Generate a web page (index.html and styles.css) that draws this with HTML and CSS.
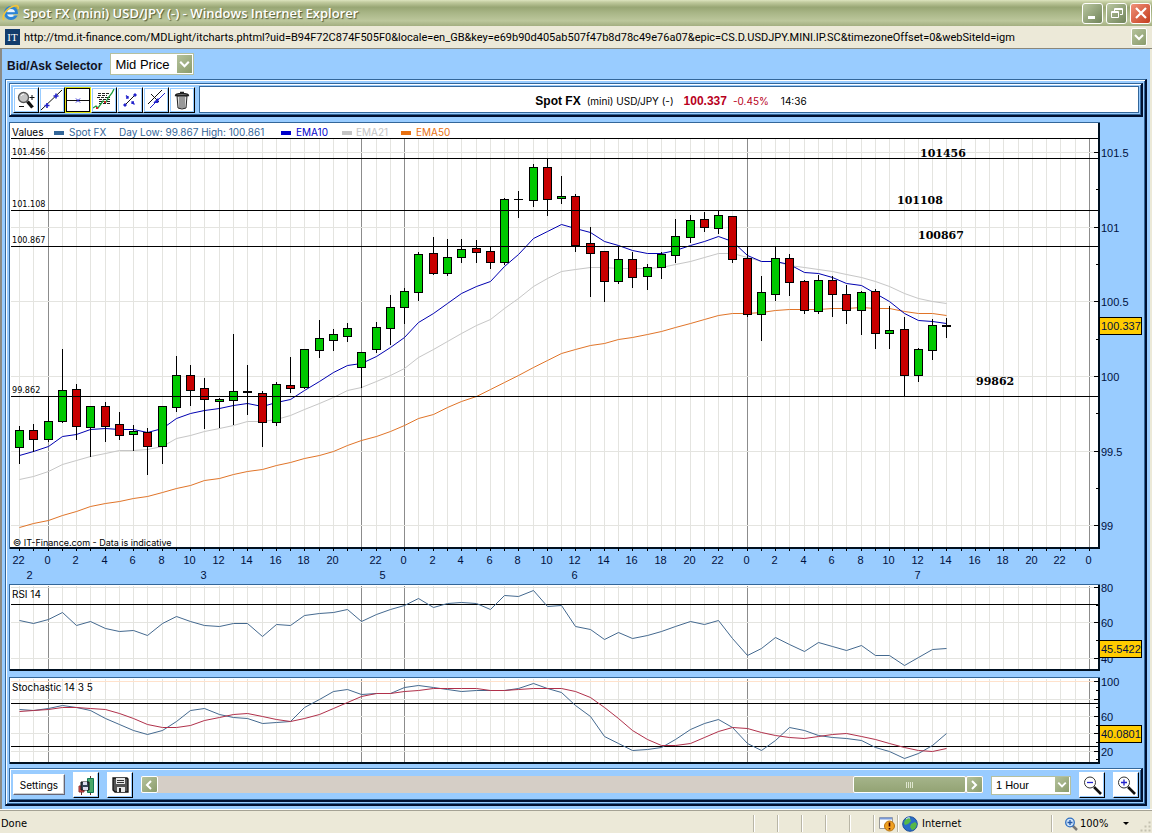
FILE: index.html
```html
<!DOCTYPE html>
<html lang="en">
<head>
<meta charset="utf-8">
<title>Spot FX (mini) USD/JPY (-)</title>
<link rel="stylesheet" href="styles.css">
</head>
<body>
<div class="window">
  <header class="titlebar">
    <svg class="ie" viewBox="0 0 18 18" width="18" height="18" aria-hidden="true">
      <circle cx="9" cy="9" r="5.5" fill="#e8f4fd" stroke="#2a83d6" stroke-width="3"/>
      <path d="M4.500 9.300h10" stroke="#2a83d6" stroke-width="2.200"/>
      <path d="M11 10.800h5" stroke="#b2bd92" stroke-width="1.500"/>
      <path d="M2 16C-1 12 5 4 12 2c3-1 5 0 4 3" fill="none" stroke="#f2c53a" stroke-width="1.600"/>
    </svg>
    <h1 class="title">Spot FX (mini) USD/JPY (-) - Windows Internet Explorer</h1>
    <button class="win" aria-label="Minimize"><svg viewBox="0 0 18 18" width="18" height="18"><path d="M4 12h7v3H4z" fill="#fff"/></svg></button>
    <button class="win" aria-label="Restore"><svg viewBox="0 0 18 18" width="18" height="18"><path d="M6.500 7V4.500h8v6H12M3.500 7.500h7v6h-7zM3.500 8.500h7M6.500 5.500h8" fill="none" stroke="#fff"/></svg></button>
    <button class="win close" aria-label="Close"><svg viewBox="0 0 18 18" width="18" height="18"><path d="M4 4l10 10M14 4L4 14" stroke="#fff" stroke-width="2.200"/></svg></button>
  </header>

  <div class="address">
    <span class="favicon">IT</span>
    <span class="url">http://tmd.it-finance.com/MDLight/itcharts.phtml?uid=B94F72C874F505F0&amp;locale=en_GB&amp;key=e69b90d405ab507f47b8d78c49e76a07&amp;epic=CS.D.USDJPY.MINI.IP.SC&amp;timezoneOffset=0&amp;webSiteId=igm</span>
    <button class="drop" aria-label="Show addresses"><svg viewBox="0 0 14 16" width="14" height="16"><path d="M3 6l4 4 4-4" fill="none" stroke="#fff" stroke-width="2"/></svg></button>
  </div>

  <main class="page">
    <div class="selector">
      <label for="price">Bid/Ask Selector</label>
      <span class="pick">
        <select id="price"><option>Mid Price</option><option>Bid</option><option>Ask</option></select>
        <svg class="arrow" viewBox="0 0 14 16" width="15" height="18" aria-hidden="true"><path d="M3 6l4 4 4-4" fill="none" stroke="#fff" stroke-width="2"/></svg>
      </span>
    </div>

    <div class="frame">
      <div class="bar tools">
        <div class="toolset">
          <button class="tool" aria-label="Zoom"><svg viewBox="0 0 22 22" width="22" height="22"><circle cx="8.500" cy="8.500" r="5" fill="#c4c4c4" stroke="#555" stroke-width="1.300"/><path d="M6 7q1-2 3-2" stroke="#fff" fill="none"/><path d="M12.500 12.500l5 6" stroke="#111" stroke-width="3.500"/><path d="M14.500 8.500h5M17 6v5M4 17.500h5" stroke="#111"/></svg></button>
          <button class="tool" aria-label="Trend line"><svg viewBox="0 0 22 22" width="22" height="22"><path d="M0 21L21 1" stroke="#111"/><path d="M6 14v5M3.500 16.500h5M15 4.500v5M12.500 7h5" stroke="#22c" stroke-width="1.600"/></svg></button>
          <button class="tool on" aria-label="Horizontal line"><svg viewBox="0 0 22 22" width="22" height="22"><path d="M0 11.500h22" stroke="#111"/><path d="M9 9.500l4 4M13 9.500l-4 4" stroke="#22c"/></svg></button>
          <button class="tool" aria-label="Indicators"><svg viewBox="0 0 22 22" width="22" height="22"><path d="M5 4.500h12M5 6.500h9M4 8.500h13M6 10.500h11M6 12.500h11M6 14.500h11" stroke="#222" stroke-dasharray="3 1"/><path d="M0 19l3-2 2 2 5-7 3 1 2-4 4-5 2-4" fill="none" stroke="#1a9c3a" stroke-width="1.300"/><path d="M3 19h2M11 13h2" stroke="#c22" stroke-width="2"/></svg></button>
          <button class="tool" aria-label="Segment"><svg viewBox="0 0 22 22" width="22" height="22"><path d="M6 16L16 6" stroke="#111"/><path d="M5 15h2v2H5zM15 5h2v2h-2z" fill="#22c" stroke="#22c"/><path d="M7 6.500l2.500 2.500M9 7v2H7M15.500 15.500L13 13M13 15v-2h2" fill="none" stroke="#22c" stroke-width="1.300"/></svg></button>
          <button class="tool" aria-label="Parallel lines"><svg viewBox="0 0 22 22" width="22" height="22"><path d="M3 15L17 1" stroke="#111"/><path d="M5 19L20 4" stroke="#22c"/><path d="M6 5l8 8" stroke="#111"/><path d="M13 9.500v4H9z" fill="#22c" stroke="#22c"/></svg></button>
          <button class="tool" aria-label="Delete"><svg viewBox="0 0 22 22" width="22" height="22"><path d="M6 7l1 12q4 2 8 0l1-12z" fill="#ddd" stroke="#222"/><path d="M9 8v11M11 8v11M13 8v11" stroke="#555"/><path d="M4.500 6.500q0-2 6.500-2t6.500 2zM9 3.500h4" fill="#ccc" stroke="#222" stroke-width="1.300"/></svg></button>
        </div>
        <div class="quote">
          <strong>Spot FX</strong><span>(mini) USD/JPY (-)</span><strong class="price">100.337</strong><span class="down">-0.45%</span><span class="time">14:36</span>
        </div>
      </div>

      <svg class="chart main" id="main" role="img" aria-label="USD/JPY price chart"></svg>
      <svg class="chart sub" id="rsi" role="img" aria-label="RSI"></svg>
      <svg class="chart sub" id="stoch" role="img" aria-label="Stochastic"></svg>

      <div class="bar controls">
        <button class="settings">Settings</button>
        <button class="square" aria-label="Save chart"><svg viewBox="0 0 22 22" width="22" height="22"><path d="M4 12h5v6H4z" fill="#e34a4a" stroke="#833"/><path d="M6.500 18v3M15.500 2v2M15.500 18v3" stroke="#633"/><path d="M12.500 4.500h6v14h-6z" fill="#4aa868" stroke="#175"/><path d="M6 8h8v8H6z" fill="#345" stroke="#111"/><path d="M8 8h4v3H8zM8 13h5v3H8z" fill="#dde"/></svg></button>
        <button class="square" aria-label="Save"><svg viewBox="0 0 22 22" width="22" height="22"><path d="M4 4h14l1 1v13H6l-2-2z" fill="#555" stroke="#111" stroke-width="1.300"/><path d="M7 4h9v6H7zM8 13h8v5H8z" fill="#e8e8e8"/><path d="M8 6.500h7M8 8.500h7" stroke="#333"/><path d="M10 14h2v4h-2z" fill="#222"/></svg></button>
        <div class="scroll">
          <button class="step" aria-label="Scroll left"><svg viewBox="0 0 14 14" width="14" height="14"><path d="M9 3L5 7l4 4" fill="none" stroke="#fff" stroke-width="2"/></svg></button>
          <div class="track"><div class="thumb"><i></i><i></i><i></i><i></i></div></div>
          <button class="step" aria-label="Scroll right"><svg viewBox="0 0 14 14" width="14" height="14"><path d="M5 3l4 4-4 4" fill="none" stroke="#fff" stroke-width="2"/></svg></button>
        </div>
        <span class="pick small">
          <select id="period" aria-label="Period"><option>1 Hour</option><option>1 Day</option></select>
          <svg class="arrow" viewBox="0 0 14 16" width="14" height="15" aria-hidden="true"><path d="M3 6l4 4 4-4" fill="none" stroke="#fff" stroke-width="2"/></svg>
        </span>
        <button class="square" aria-label="Zoom out"><svg viewBox="0 0 22 22" width="22" height="22"><path d="M13 13l7 7" stroke="#111" stroke-width="2.600"/><circle cx="9" cy="8.500" r="5.500" fill="#fff" stroke="#333"/><path d="M6 8.500h6" stroke="#22c" stroke-width="1.300"/></svg></button>
        <button class="square" aria-label="Zoom in"><svg viewBox="0 0 22 22" width="22" height="22"><path d="M13 13l7 7" stroke="#111" stroke-width="2.600"/><circle cx="9" cy="8.500" r="5.500" fill="#fff" stroke="#333"/><path d="M6 8.500h6M9 5.500v6" stroke="#22c" stroke-width="1.300"/></svg></button>
      </div>
    </div>
  </main>

  <footer class="status">
    <span class="done">Done</span>
    <span class="cell"></span><span class="cell"></span><span class="cell"></span><span class="cell"></span><span class="cell"></span>
    <span class="cell"><svg viewBox="0 0 18 16" width="18" height="16"><path d="M1.500 1.500h13v11h-13z" fill="#fff" stroke="#999"/><path d="M2 2.500h12" stroke="#7a9ad8" stroke-width="2"/><circle cx="11.500" cy="10" r="5" fill="#f0a020" stroke="#b87410"/><path d="M11.500 6.500v4M11.500 12v1.500" stroke="#400" stroke-width="1.600"/></svg></span>
    <span class="cell zone"><svg viewBox="0 0 16 16" width="16" height="16"><circle cx="8" cy="8" r="7.300" fill="#2a6cc8" stroke="#1c4f98"/><path d="M3 4q3-3 5-2l1 3-3 3-3 1-1-2zM9 8l4-2 2 2-2 5-3 1-2-3z" fill="#57b947"/><path d="M4 3q2-2 4-1" stroke="#cfe6ff" fill="none"/></svg>Internet</span>
    <button class="cell zoom"><svg viewBox="0 0 14 14" width="14" height="14"><path d="M8 8l5 5" stroke="#777" stroke-width="2.500"/><circle cx="6" cy="5.500" r="4.300" fill="#cfe4fa" stroke="#2f6fc0" stroke-width="1.300"/><path d="M3.500 5.500h5M6 3v5" stroke="#2357a8" stroke-width="1.300"/></svg>100%<svg class="caret" viewBox="0 0 6 4" width="6" height="4"><path d="M0 0h6L3 3z"/></svg></button>
    <svg class="grip" viewBox="0 0 12 12" width="12" height="12"><path d="M8 0h3v3H8zM4 4h3v3H4zM8 4h3v3H8zM0 8h3v3H0zM4 8h3v3H4zM8 8h3v3H8z" fill="#c4c1b0" stroke="#ece9d8"/></svg>
  </footer>
</div>
<script src="chart.js"></script>
</body>
</html>
```

FILE: styles.css
```css
* { box-sizing: border-box; }
body {
  margin: 0;
  background: #fff;
  font-family: "Liberation Sans", Arial, sans-serif;
  color: #000;
}
button { margin: 0; padding: 0; font: inherit; color: inherit; }
svg { display: block; flex: none; }

.window {
  display: flex;
  flex-direction: column;
  min-height: 100vh;
  margin-right: 3px;
}

.titlebar {
  display: flex;
  align-items: center;
  gap: 3px;
  height: 26px;
  padding: 0 1px 0 2px;
  background: linear-gradient(#dde4bf 0, #c3cca0 8%, #98a674 28%, #a9b687 50%, #bcc79c 80%, #a3ae80 100%);
}
.title {
  flex: 1;
  margin: 0;
  font: 600 13px "Open Sans", sans-serif;
  color: #fff;
  text-shadow: 1px 1px 1px #4f5a34;
  white-space: nowrap;
}
.win {
  display: flex;
  align-items: center;
  justify-content: center;
  width: 21px;
  height: 21px;
  border: 1px solid #fff;
  border-radius: 3px;
  background: linear-gradient(135deg, #b9c6a0, #71845a);
}
.close { background: linear-gradient(135deg, #f0917a, #c43c1c); }

.address {
  display: flex;
  align-items: center;
  gap: 4px;
  height: 23px;
  padding: 0 5px;
  background: #ece9d8;
  border-bottom: 1px solid #8a877a;
  font: 11px Roboto, sans-serif;
}
.favicon {
  width: 15px;
  height: 16px;
  background: #123c6c;
  color: #fff;
  font: 11px/16px "Liberation Serif", serif;
  text-align: center;
}
.url { flex: 1; white-space: nowrap; overflow: hidden; }
.drop, .step {
  border: 1px solid #fff;
  border-radius: 2px;
  background: linear-gradient(135deg, #b5c29c, #8b9c6c);
}

.page {
  flex: 1;
  display: flex;
  flex-direction: column;
  padding: 0 3px 3px;
  background: #9cf;
  border-left: 2px solid #8b8b86;
  border-right: 2px solid #ece9d8;
}
.selector {
  display: flex;
  align-items: center;
  gap: 8px;
  height: 30px;
  padding-left: 2px;
  font-size: 12px;
  font-weight: bold;
  color: #112;
}
.selector label { padding-top: 4px; }
.pick { position: relative; display: block; width: 84px; height: 22px; }
.pick select {
  width: 100%;
  height: 100%;
  appearance: none;
  padding: 0 20px 0 4px;
  border: 1px solid #b5c0a0;
  border-radius: 0;
  background: #fff;
  color: #000;
  font: 13px "Liberation Sans", sans-serif;
}
.arrow {
  position: absolute;
  right: 2px;
  top: 2px;
  background: linear-gradient(135deg, #b5c29c, #8b9c6c);
  pointer-events: none;
}
.small { width: 80px; height: 19px; }
.small select { font-size: 11px; }

.frame, .bar {
  border: 1px solid #369;
  border-right: 2px solid #001030;
  border-bottom: 2px solid #001030;
  box-shadow: inset 1px 1px #fff, inset -1px -1px #369;
}
.frame {
  flex: 1;
  display: flex;
  flex-direction: column;
  padding: 3px 2px 2px 3px;
}
.bar { display: flex; align-items: center; height: 34px; padding: 0 2px 0 3px; flex: none; }
.tools { gap: 4px; margin-bottom: 5px; }
.controls { gap: 8px; }
.toolset { display: flex; }
.tool, .square {
  display: flex;
  align-items: center;
  justify-content: center;
  width: 26px;
  height: 26px;
  border: 1px solid #fff;
  border-right: 1px solid #000;
  border-bottom: 1px solid #000;
  background: #fff;
}
.tool { box-shadow: inset 0 0 0 1px #9cf; }
.square { box-shadow: inset -1px -1px #9cf; }
.tool.on { border-color: #dfdf10; box-shadow: inset 0 0 0 1px #000; }
.quote {
  flex: 1;
  display: flex;
  align-items: center;
  justify-content: center;
  height: 27px;
  padding: 2px 0 0 4px;
  border: 1px solid #369;
  background: #fff;
  font: 10px Inter, "Liberation Sans", sans-serif;
}
.quote strong { font: bold 12px "Liberation Sans", sans-serif; }
.quote strong + span { margin-left: 6px; }
.quote .price { margin-left: 10px; }
.price, .down { color: #b8001c; }
.time { margin-left: 12px; }

.chart { width: 100%; display: block; overflow: visible; font-family: "Liberation Sans", sans-serif; font-size: 11px; }
.main { flex: 1; min-height: 420px; height: 0; }
.sub { flex: none; height: 88px; margin-bottom: 5px; }
#stoch { margin-bottom: 3px; }
.panel { fill: #fff; stroke: #369; }
.edge { stroke: #001020; stroke-width: 2; }
.grid { stroke: #e4e4e0; }
.day { stroke: #8c8c8c; }
.rule { stroke: #000; }
.hot { stroke: #ffe2cc; }
.plain { fill: none; stroke-width: 1; }
.ema10 { stroke: #0000b0; }
.ema21 { stroke: #c6c6c6; }
.ema50 { stroke: #e07428; }
.slate { stroke: #44698f; }
.wine { stroke: #b0304a; }
.up { fill: #00c800; stroke: #000; }
.fall { fill: #c80000; stroke: #000; }
.level { font: 9px "DejaVu Sans Condensed", "DejaVu Sans", sans-serif; }
.copy { font: 9px Inter, sans-serif; }
.legend { font: 10px Inter, sans-serif; }
.note { font: bold 11px "DejaVu Serif", serif; }
.axis { fill: #001040; }
.mid { text-anchor: middle; }
.tag { fill: #fc0; stroke: #000; }
.crisp { shape-rendering: crispEdges; }

.settings {
  width: 52px;
  height: 21px;
  border: 1px solid #fff;
  border-right: 1px solid #667;
  border-bottom: 1px solid #667;
  background: #fff;
  box-shadow: inset -1px -1px #ccc;
  font: 10px Inter, sans-serif;
}
.scroll { flex: 1; display: flex; height: 17px; background: #d5cec6; }
.step { width: 17px; height: 17px; }
.track { flex: 1; display: flex; justify-content: flex-end; }
.thumb {
  display: flex;
  align-items: center;
  justify-content: center;
  gap: 1px;
  width: 14%;
  border: 1px solid #fff;
  border-radius: 2px;
  background: linear-gradient(#a5b48a, #93a374);
}
.thumb i { width: 1px; height: 6px; background: #dfe6cf; }

.status {
  display: flex;
  align-items: center;
  height: 24px;
  padding: 4px 0 0 1px;
  border-top: 1px solid #fff;
  background: #ece9d8;
  box-shadow: inset 0 1px #a5a294;
  font: 11px "DejaVu Sans Condensed", "DejaVu Sans", sans-serif;
}
.done { flex: 1; }
.cell {
  display: flex;
  align-items: center;
  width: 24px;
  height: 17px;
  padding-left: 4px;
  border: 0;
  border-left: 1px solid #b9b6a6;
  box-shadow: inset 1px 0 #fff;
  background: none;
}
.zone { width: 154px; gap: 4px; }
.zoom { width: 89px; padding-left: 12px; gap: 2px; }
.caret { margin-left: 13px; }
.grip { align-self: flex-end; }
```

FILE: chart.js
```javascript
// Candles: [up, high, open/close top, open/close bottom, low], in canvas rows.
const candles = [
  [1,426,430,447,463],[0,424,430,439,451],[1,397,421,439,441],[1,349,390,421,422],[0,384,389,426,439],
  [1,406,406,427,456],[0,402,406,426,441],[0,412,424,435,439],[1,425,431,434,450],[0,428,432,446,474],
  [1,406,406,446,463],[1,356,375,407,411],[0,365,375,390,405],[0,378,388,399,428],[1,398,399,401,427],
  [1,334,391,400,424],[1,365,391,392,414],[0,391,393,422,446],[1,382,384,422,425],[0,357,385,388,392],
  [1,349,349,387,388],[1,320,338,350,357],[1,329,334,340,350],[1,323,328,336,341],[1,352,352,367,387],
  [1,322,327,349,352],[1,295,307,328,344],[1,288,291,307,323],[1,252,254,292,300],[0,237,253,273,274],
  [1,239,257,273,275],[1,239,249,257,262],[0,240,248,252,262],[0,247,251,262,268],[1,198,199,262,264],
  [1,191,199,199,217],[1,164,167,200,206],[0,158,167,199,215],[1,176,196,198,203],[0,194,196,245,251],
  [0,227,243,253,296],[0,251,251,281,301],[1,247,259,281,283],[0,252,259,277,287],[1,264,267,276,289],
  [1,252,254,267,278],[1,219,236,255,262],[1,215,220,237,242],[0,212,219,227,231],[1,211,215,228,233],
  [0,216,216,259,262],[0,246,258,314,316],[1,276,292,314,340],[1,246,258,294,300],[0,254,258,282,295],
  [0,280,281,310,313],[1,275,280,311,313],[0,276,280,294,316],[0,285,294,310,323],[1,291,292,310,334],
  [0,289,291,333,348],[1,306,330,333,348],[0,317,329,375,396],[1,348,349,375,381],[1,319,325,350,359],
  [1,318,325,326,337]
];
const ema10 = [455,451,446,436,434,429,428,429,429,432,428,418,413,410,408,405,403,406,402,399,390,381,372,365,363,356,347,337,322,313,303,293,286,281,266,254,238,231,224,228,232,241,245,250,253,253,250,245,241,236,241,255,261,261,264,272,273,277,283,285,293,301,313,320,321,323];
const ema21 = [479,476,471,464,460,456,453,450,450,449,446,438,435,431,428,425,421,421,419,415,409,403,397,390,387,381,375,368,357,349,341,333,325,319,308,298,286,278,271,269,267,267,268,268,268,267,264,261,257,253,253,257,261,261,265,267,269,271,274,277,281,286,293,298,301,303];
const ema50 = [527,523,520,515,511,506,503,501,498,496,492,488,485,480,478,474,471,469,465,462,458,455,451,445,440,436,431,425,418,414,407,401,396,389,382,375,367,360,353,349,345,343,339,337,334,331,327,323,319,315,313,313,312,310,309,309,309,308,308,307,308,308,311,313,313,315];
const rsi = [620,623,619,612,625,621,628,631,630,635,623,616,621,625,626,623,623,636,624,625,615,613,612,609,621,614,609,605,598,607,603,602,603,609,595,596,590,606,605,626,629,639,632,638,635,631,626,621,624,620,638,655,648,637,644,651,642,646,650,645,655,655,665,657,649,648];
const fast = [709,710,708,705,707,710,718,724,730,734,730,721,710,708,714,717,718,723,722,721,707,699,691,689,694,693,693,687,685,687,689,691,690,690,690,688,683,688,692,705,716,736,743,750,749,747,739,729,723,719,727,743,750,740,727,730,735,737,738,740,747,751,758,753,745,733];
const slow = [711,710,709,707,707,708,709,713,718,724,727,727,725,720,717,714,713,716,719,721,718,714,708,702,696,693,693,691,690,688,688,688,688,690,690,689,688,688,688,691,697,707,718,730,739,745,745,743,737,731,727,728,732,735,737,738,736,734,733,736,739,743,747,750,751,748];
const days = [2, 24, 27, 51, 75];
const BARS = 75, AXIS = 44;

function surface(id) {
  const el = document.getElementById(id);
  const box = el.getBoundingClientRect();
  const out = [];
  const edge = Math.round(box.width) - AXIS;
  const pitch = (edge - 20) / BARS;
  return {
    height: Math.round(box.height), edge,
    x: i => Math.round(10 + i * pitch) + 0.5,
    line: (x1, y1, x2, y2, cls) => out.push(`<line class="crisp ${cls}" x1="${x1}" y1="${y1}" x2="${x2}" y2="${y2}"/>`),
    rect: (x, y, w, h, cls, fill) => out.push(`<rect class="crisp ${cls}" x="${x}" y="${y}" width="${w}" height="${h}"${fill ? ` fill="${fill}"` : ''}/>`),
    text: (x, y, s, cls, fill) => out.push(`<text x="${x}" y="${y}" class="${cls}"${fill ? ` fill="${fill}"` : ''}>${s}</text>`),
    plot(rows, y, cls) {
      const points = rows.map((v, i) => this.x(i) + ',' + (y(v) + 0.5)).join(' ');
      out.push(`<polyline class="plain ${cls}" points="${points}"/>`);
    },
    show: () => { el.innerHTML = out.join(''); }
  };
}

function frame(c, top, bottom) {
  c.rect(0.5, 0.5, c.edge, bottom, 'panel');
  for (let i = 0; i <= BARS; i++) c.line(c.x(i), top, c.x(i), bottom, days.includes(i) ? 'day' : 'grid');
}
function outline(c, bottom) {
  c.line(1, bottom, c.edge + 1, bottom, 'edge');
  c.line(c.edge, 1, c.edge, bottom + 1, 'edge');
}
function tag(c, y, s) {
  c.rect(c.edge + 0.5, y - 8.5, AXIS - 2, 17, 'tag');
  c.text(c.edge + 2, y + 4, s, 'axis');
}

function drawMain() {
  const c = surface('main');
  const bottom = c.height - 36;
  const y = v => Math.round(17 + (v - 139) * (bottom - 17) / 409);
  frame(c, 17, bottom);
  const marks = [[152, '101.5'], [227, '101'], [301, '100.5'], [376, '100'], [451, '99.5'], [525, '99']];
  marks.forEach(([v]) => c.line(2, y(v) + 0.5, c.edge, y(v) + 0.5, 'grid'));
  c.line(2, 16.5, c.edge, 16.5, 'rule');
  c.plot(ema21, y, 'ema21');
  c.plot(ema50, y, 'ema50');
  c.plot(ema10, y, 'ema10');
  candles.forEach(([up, hi, a, b, lo], i) => {
    c.line(c.x(i), y(hi), c.x(i), y(lo) + 1, 'rule');
    c.rect(c.x(i) - 4, y(a) + 0.5, 8, Math.max(y(b) - y(a), 0.01), up ? 'up' : 'fall');
  });
  [[158, '101.456'], [210, '101.108'], [246, '100.867'], [396, '99.862']].forEach(([v, s]) => {
    c.line(2, y(v) + 0.5, c.edge, y(v) + 0.5, 'rule');
    c.text(3, y(v) - 3, s, 'level');
  });
  const nx = x => c.edge * x / 1090;
  c.text(nx(911), y(157), '101456', 'note');
  c.text(nx(888), y(204), '101108', 'note');
  c.text(nx(909), y(239), '100867', 'note');
  c.text(nx(967), y(385), '99862', 'note');

  c.text(3, 14, 'Values', 'legend');
  [[45, '#369', 'Spot FX', 60], [272, '#00c', 'EMA10', 287], [333, '#c4c4c4', 'EMA21', 347], [392, '#e87010', 'EMA50', 407]]
    .forEach(([x, col, s, tx]) => {
      c.rect(x, 9, 10, 4, 'key', col);
      c.text(tx, 14, s, 'legend', col);
    });
  c.text(110, 14, 'Day Low: 99.867 High: 100.861', 'legend', '#369');
  c.text(4, bottom - 2, '© IT-Finance.com - Data is indicative', 'copy');
  outline(c, bottom);

  marks.forEach(([v, s]) => {
    c.line(c.edge - 5, y(v) + 0.5, c.edge, y(v) + 0.5, 'rule');
    c.text(c.edge + 2, y(v) + 5, s, 'axis');
  });
  [189, 264, 339, 413, 488].forEach(v => c.line(c.edge - 3, y(v) + 0.5, c.edge, y(v) + 0.5, 'rule'));
  tag(c, y(326), '100.337');

  for (let i = 0; i <= BARS; i++) {
    c.line(c.x(i), bottom, c.x(i), bottom + 3, 'rule');
    const early = i <= 22 && i % 2 === 0, late = i >= 25 && i % 2 === 1;
    if (early || late) c.text(c.x(i) - 1, bottom + 16, early ? (22 + i) % 24 : (i + 21) % 24, 'axis mid');
  }
  [[0.75, 2], [13, 3], [25.5, 5], [39, 6], [63, 7]].forEach(([i, s]) => c.text(c.x(i) - 1, bottom + 31, s, 'axis mid'));
  c.show();
}

function drawSub(id, top, title, grid, minor, rules, series, last) {
  const c = surface(id);
  const y = v => v - top;
  frame(c, 2, 86);
  grid.forEach(([v, s, cls]) => c.line(2, y(v) + 0.5, c.edge, y(v) + 0.5, cls || 'grid'));
  rules.forEach(v => c.line(2, y(v) + 0.5, c.edge, y(v) + 0.5, 'rule'));
  series.forEach(([rows, cls]) => c.plot(rows, y, cls));
  c.text(3, 14, title, 'legend');
  outline(c, 86);
  grid.forEach(([v, s]) => {
    c.line(c.edge - 5, y(v) + 0.5, c.edge, y(v) + 0.5, 'rule');
    if (s) c.text(c.edge + 2, y(v) + 5, s, 'axis');
  });
  minor.forEach(v => c.line(c.edge - 3, y(v) + 0.5, c.edge, y(v) + 0.5, 'rule'));
  tag(c, y(last[0]), last[1]);
  c.show();
}

function draw() {
  drawMain();
  drawSub('rsi', 584, 'RSI 14', [[587, '80'], [622, '60'], [658, '40']], [605, 640], [604], [[rsi, 'slate']], [649, '45.5422']);
  drawSub('stoch', 677, 'Stochastic 14 3 5',
    [[681, '100', 'hot'], [699, ''], [716, '60'], [733, ''], [751, '20']], [690, 707, 725, 742, 759], [703, 746],
    [[fast, 'slate'], [slow, 'wine']], [734, '40.0801']);
}
draw();
window.addEventListener('resize', draw);
```
